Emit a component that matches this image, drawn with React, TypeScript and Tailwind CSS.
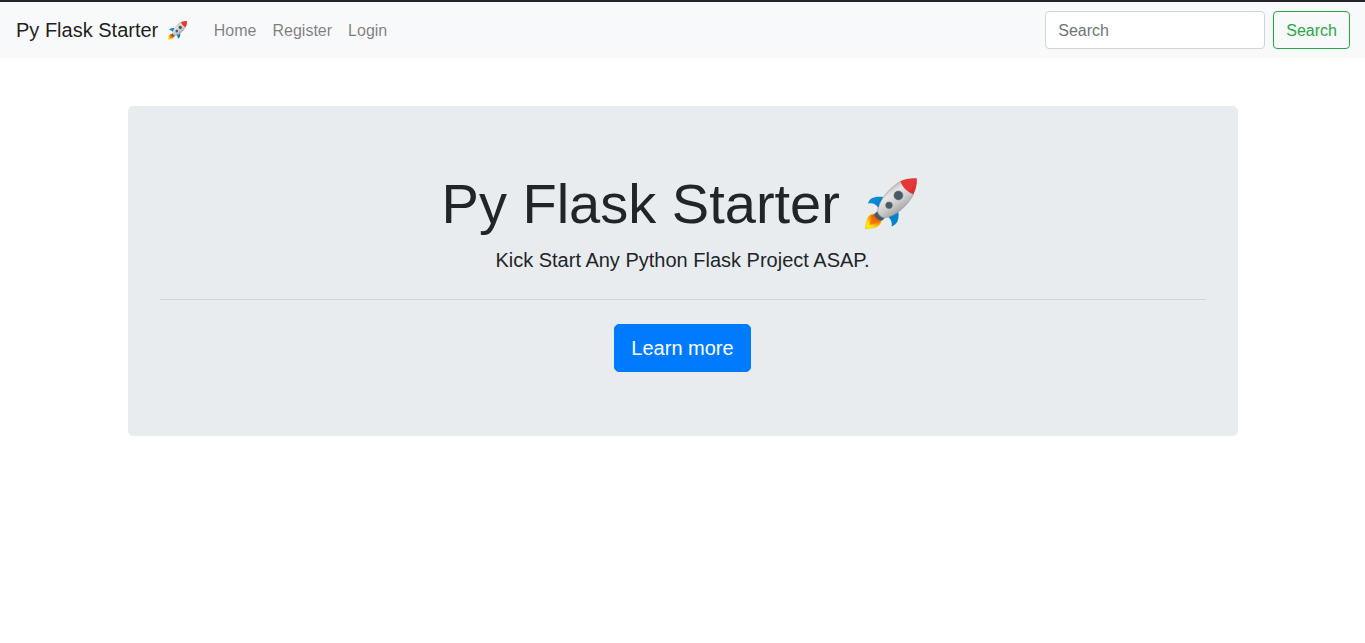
import { useId } from "react";

function Rocket({ className }: { className: string }) {
  const id = useId();
  const body = `${id}-body`;
  const flame = `${id}-flame`;
  const fin = `${id}-fin`;
  return (
    <svg viewBox="29 29 158 158" role="img" aria-label="rocket" className={className}>
      <defs>
        <linearGradient id={body} gradientUnits="userSpaceOnUse" x1="98" y1="62" x2="142" y2="128">
          <stop offset="0" stopColor="#bdbdbd" />
          <stop offset="0.25" stopColor="#e8e8e8" />
          <stop offset="0.6" stopColor="#cfcfcf" />
          <stop offset="1" stopColor="#a4a4a4" />
        </linearGradient>
        <radialGradient id={flame} gradientUnits="userSpaceOnUse" cx="66" cy="146" r="34">
          <stop offset="0" stopColor="#d84315" />
          <stop offset="0.45" stopColor="#ef6c00" />
          <stop offset="0.8" stopColor="#fdb515" />
          <stop offset="1" stopColor="#ffeb00" />
        </radialGradient>
        <linearGradient id={fin} gradientUnits="userSpaceOnUse" x1="48" y1="88" x2="120" y2="172">
          <stop offset="0" stopColor="#0a8fdb" />
          <stop offset="0.5" stopColor="#0277bd" />
          <stop offset="1" stopColor="#0288d1" />
        </linearGradient>
      </defs>
      <path d="M38 107C43 89 58 84 84 87L70 120C62 107 51 103 38 107Z" fill={`url(#${fin})`} />
      <path d="M130 131C134 152 128 171 110 176C112 163 108 154 98 146Z" fill={`url(#${fin})`} />
      <path d="M59 138C45 139 37 147 36 155C34 164 31 172 31 184C41 180 51 182 61 179C70 175 77 168 79 158Z" fill={`url(#${flame})`} stroke="#e9b800" strokeWidth="2" />
      <path d="M58 147C49 152 46 158 42 172C56 168 62 168 70 159Z" fill="#ef6c00" opacity="0.7" />
      <path d="M67 130C61 134 57 138 58 143C62 151 69 157 78 159C83 158 86 154 89 149Z" fill="#455a64" />
      <path d="M67 130C72 102 92 67 138 38L177 78C153 121 119 145 89 150C78 149 69 141 67 130Z" fill={`url(#${body})`} stroke="#9b9b9b" strokeWidth="2" />
      <path d="M137 39C151 31 171 30 186 30C187 47 184 63 176 78C158 72 142 58 137 39Z" fill="#e53935" />
      <path d="M186 30C187 47 184 63 176 78C171 76 166 74 162 70C174 58 181 45 186 30Z" fill="#d32f2f" opacity="0.6" />
      <circle cx="130.500" cy="82" r="13.500" fill="#455a64" stroke="#606c72" strokeWidth="2" />
      <circle cx="102" cy="112" r="10" fill="#455a64" stroke="#606c72" strokeWidth="2" />
    </svg>
  );
}

export default function App() {
  return (
    <div className="font-['Liberation_Sans',Arial,sans-serif] text-base leading-6 text-[#212529]">
      <nav className="flex flex-wrap items-center border-t-2 border-[#212529] bg-[#f8f9fa] py-2 pr-[15px] pl-4">
        <a href="#" className="mr-4 py-1 text-xl leading-[30px] text-black/90">
          Py Flask Starter <Rocket className="mr-[3px] ml-1 inline-block size-[19px] align-[-3px]" />
        </a>
        <ul className="mr-auto flex text-black/50">
          <li><a href="#" className="block px-2 pt-[9px] pb-[7px]">Home</a></li>
          <li><a href="#" className="block px-2 pt-[9px] pb-[7px]">Register</a></li>
          <li><a href="#" className="block px-2 pt-[9px] pb-[7px]">Login</a></li>
        </ul>
        <form className="flex items-center gap-2">
          <input
            type="search"
            placeholder="Search"
            aria-label="Search"
            className="w-[220px] rounded border border-[#ced4da] bg-white px-3 pt-[7px] pb-[5px] placeholder:text-[#6c757d]"
          />
          <button type="button" className="rounded border border-[#28a745] px-3 pt-[7px] pb-[5px] text-[#28a745]">
            Search
          </button>
        </form>
      </nav>
      <main className="mx-auto mt-12 max-w-[1140px] px-[15px]">
        <section className="rounded-[5px] bg-[#e9ecef] px-8 py-16 text-center">
          <h1 className="mb-2 text-[56px] leading-[67px]">
            Py Flask Starter <Rocket className="mr-1.5 ml-2.5 inline-block size-[52px] align-[-7px]" />
          </h1>
          <p className="text-xl leading-[30px]">Kick Start Any Python Flask Project ASAP.</p>
          <hr className="my-6 border-black/10" />
          <a href="#" className="inline-block rounded-[5px] border border-[#007bff] bg-[#007bff] px-4 py-2 text-xl leading-[30px] text-white">
            Learn more
          </a>
        </section>
      </main>
    </div>
  );
}
